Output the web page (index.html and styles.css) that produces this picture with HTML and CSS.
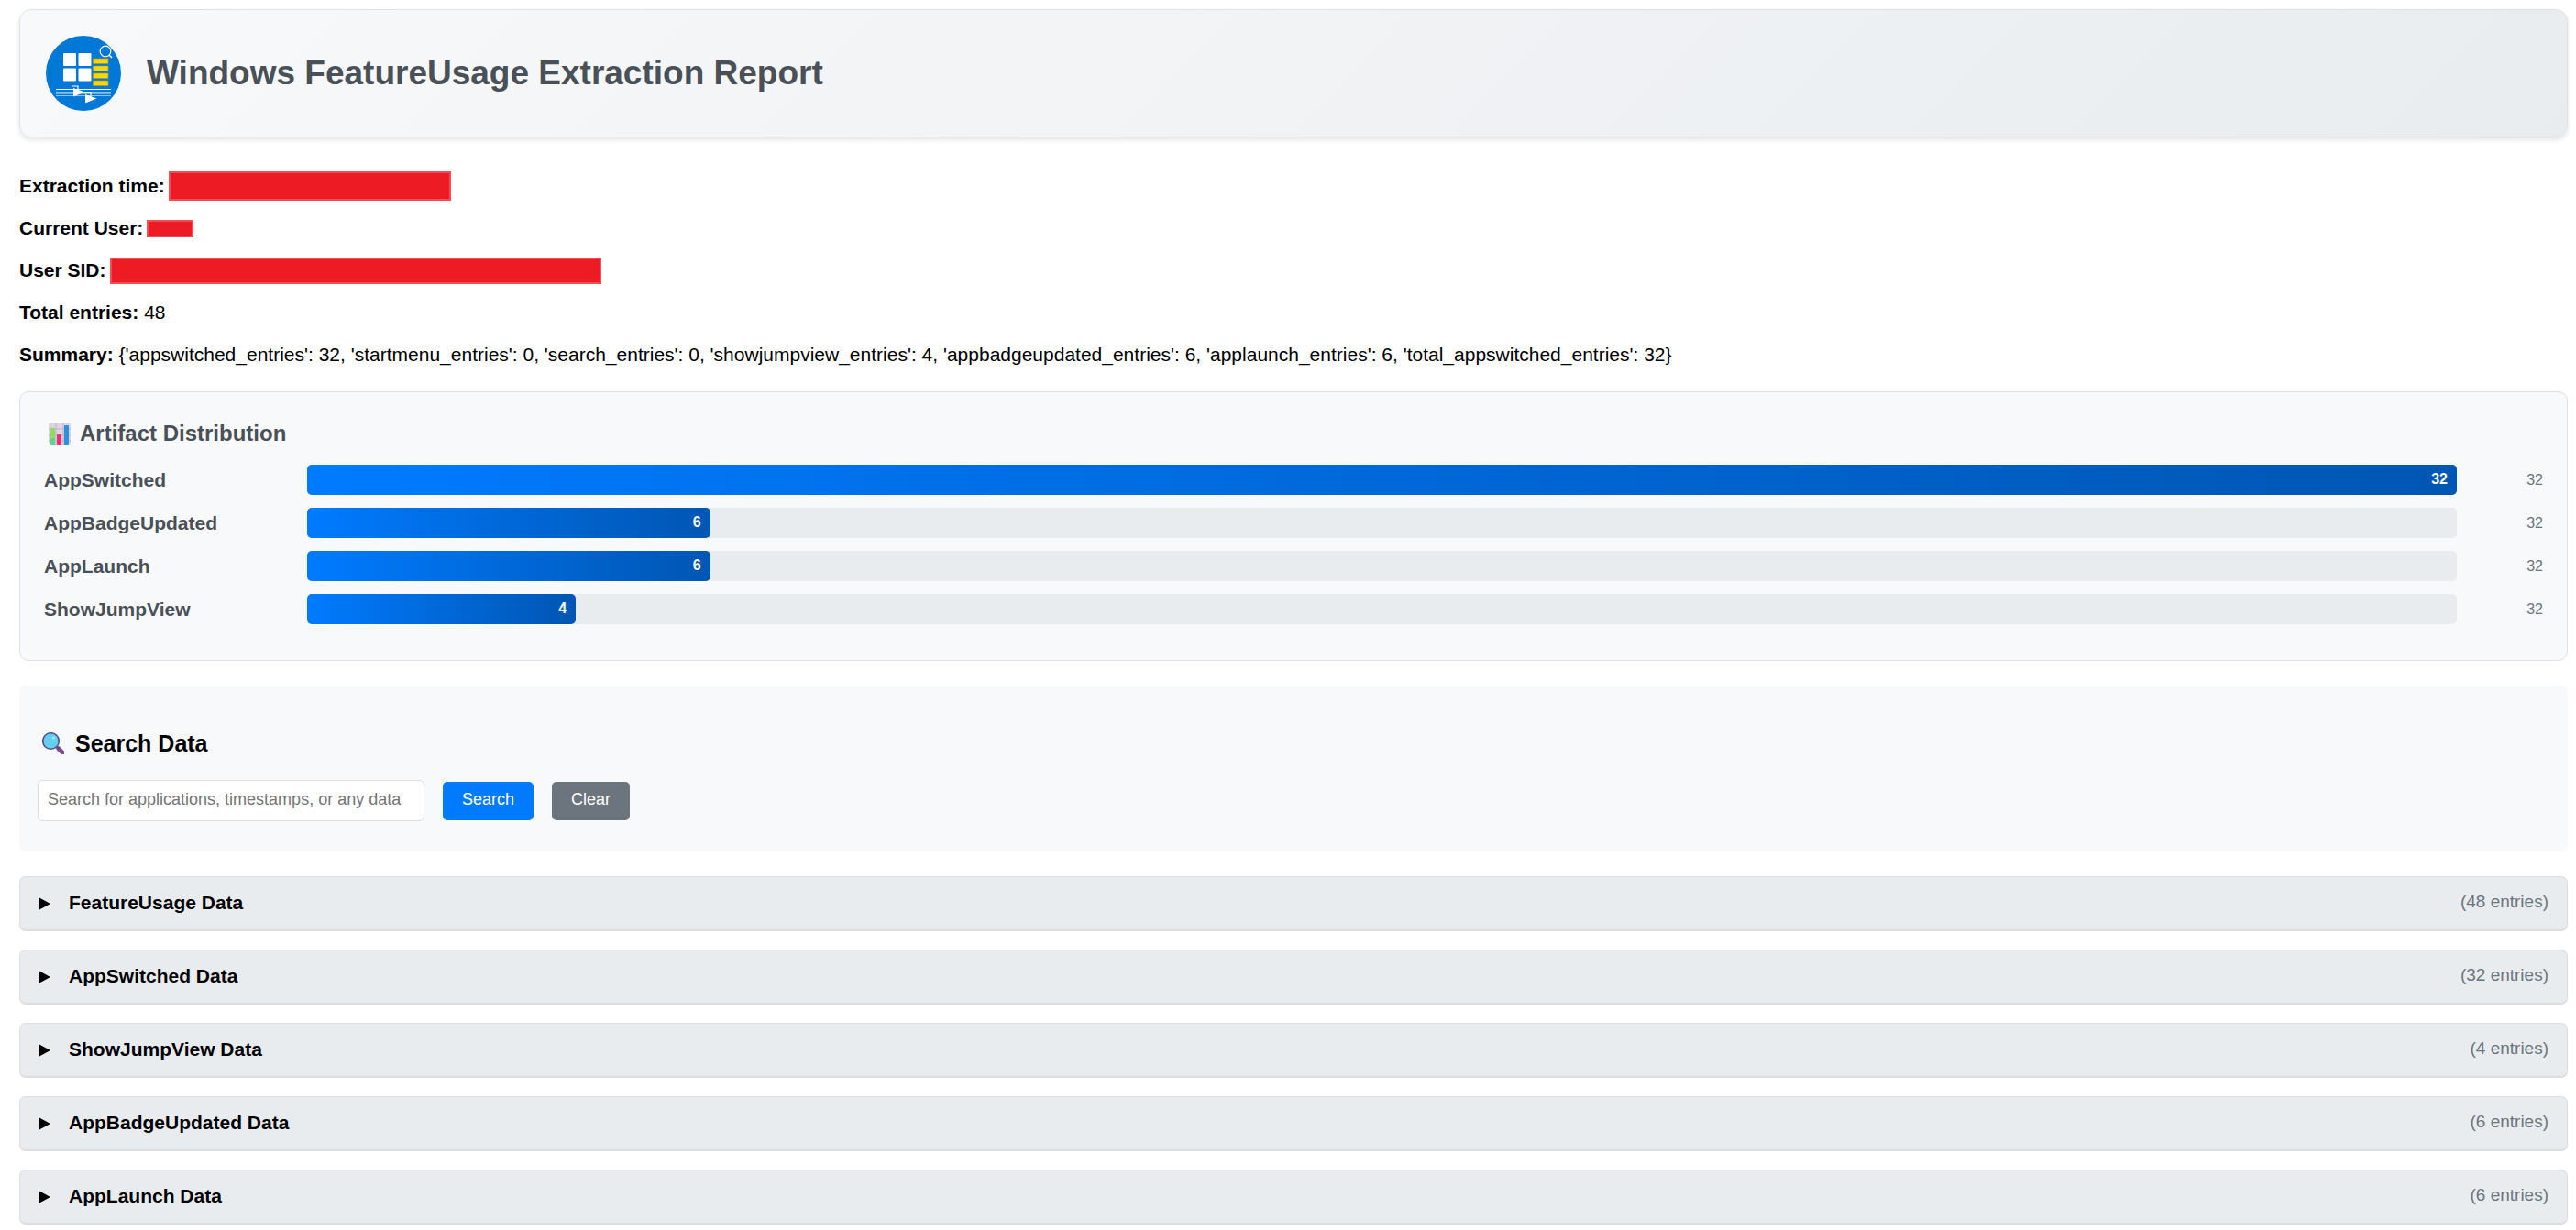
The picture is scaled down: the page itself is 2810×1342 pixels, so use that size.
FILE: index.html
```html
<!DOCTYPE html>
<html lang="en">
<head>
<meta charset="utf-8">
<title>Windows FeatureUsage Extraction Report</title>
<link rel="stylesheet" href="styles.css">
</head>
<body>
<header class="banner">
  <svg class="logo" viewBox="0 0 82 82" aria-hidden="true">
    <circle cx="41" cy="41" r="41" fill="#0078d7"/>
    <g fill="#fff">
      <rect x="19" y="19" width="14" height="14" rx="1"/>
      <rect x="35.500" y="19" width="14" height="14" rx="1"/>
      <rect x="19" y="35.500" width="14" height="14" rx="1"/>
      <rect x="35.500" y="35.500" width="14" height="14" rx="1"/>
    </g>
    <g fill="#ffd600" stroke="#a89a30" stroke-width=".6">
      <rect x="51.500" y="25" width="16.500" height="5.500"/>
      <rect x="51.500" y="33" width="16.500" height="5.500"/>
      <rect x="51.500" y="41" width="16.500" height="5.500"/>
      <rect x="51.500" y="49" width="16.500" height="5.500"/>
    </g>
    <g fill="none" stroke="#fff">
      <circle cx="65" cy="17" r="5.800" stroke-width="1.200"/>
      <path d="M69 21l3 3" stroke-width="1.600"/>
      <path d="M11 58.500h60" stroke-width="1.200"/>
      <path d="M11 61.500h60M11 65.500h60" stroke-width="1" opacity=".55"/>
      <path d="M11 63.500h60" stroke-width="1" opacity=".4"/>
      <path d="M28 55h7v5M42 61.500h7v5" stroke-width="1.200"/>
    </g>
    <path d="M30 57l12.500 4.500L30 66.500zM43 64l12.500 4.500L43 73.500z" fill="#fff"/>
  </svg>
  <h1 class="banner-title">Windows FeatureUsage Extraction Report</h1>
</header>

<section class="facts">
  <p class="fact"><strong>Extraction time:</strong><span class="redacted redacted-time"></span></p>
  <p class="fact"><strong>Current User:</strong><span class="redacted redacted-user"></span></p>
  <p class="fact"><strong>User SID:</strong><span class="redacted redacted-sid"></span></p>
  <p class="fact"><span><strong>Total entries:</strong> 48</span></p>
  <p class="fact"><span><strong>Summary:</strong> {'appswitched_entries': 32, 'startmenu_entries': 0, 'search_entries': 0, 'showjumpview_entries': 4, 'appbadgeupdated_entries': 6, 'applaunch_entries': 6, 'total_appswitched_entries': 32}</span></p>
</section>

<section class="chart">
  <h2 class="chart-title">
    <svg class="glyph" viewBox="0 0 24 24" aria-hidden="true">
      <rect width="24" height="24" rx="3" fill="#dcd5e2"/>
      <path d="M8 0v24M16 0v24M0 7h24M0 14h24M0 20h24" stroke="#bdb4c6" stroke-width="1"/>
      <rect x="2" y="6" width="5" height="18" rx="1" fill="#8fdc62"/>
      <path d="M2 17h5v7H2z" fill="#5fd58a"/>
      <rect x="9" y="13" width="5" height="11" rx="1" fill="#e8306f"/>
      <rect x="17" y="3" width="5" height="21" rx="1" fill="#2f8ee0"/>
    </svg>
    Artifact Distribution
  </h2>
  <div class="bars">
    <div class="bar-row"><span class="bar-label">AppSwitched</span><div class="track"><div class="fill" style="width:100%">32</div></div><span class="bar-max">32</span></div>
    <div class="bar-row"><span class="bar-label">AppBadgeUpdated</span><div class="track"><div class="fill" style="width:18.75%">6</div></div><span class="bar-max">32</span></div>
    <div class="bar-row"><span class="bar-label">AppLaunch</span><div class="track"><div class="fill" style="width:18.75%">6</div></div><span class="bar-max">32</span></div>
    <div class="bar-row"><span class="bar-label">ShowJumpView</span><div class="track"><div class="fill" style="width:12.5%">4</div></div><span class="bar-max">32</span></div>
  </div>
</section>

<section class="search">
  <h2 class="search-title">
    <svg class="glyph" viewBox="0 0 24 24" aria-hidden="true">
      <path d="M18 18l4 4" stroke="#874c8c" stroke-width="5" stroke-linecap="round"/>
      <path d="M15 15l3 3" stroke="#5b4a86" stroke-width="3"/>
      <circle cx="9.500" cy="9.500" r="8.800" fill="#62d0ee" stroke="#5a4f93" stroke-width="1.600"/>
      <circle cx="12.500" cy="6" r="1.600" fill="#a5e6f7"/>
    </svg>
    Search Data
  </h2>
  <form class="search-form">
    <input class="search-input" type="text" aria-label="Search data" placeholder="Search for applications, timestamps, or any data">
    <button class="btn btn-primary" type="button">Search</button>
    <button class="btn btn-muted" type="reset">Clear</button>
  </form>
</section>

<main class="groups">
  <details class="group"><summary class="group-head"><svg class="arrow" viewBox="0 0 12 13" aria-hidden="true"><path d="M0 0l12 6.500L0 13z"/></svg><span class="group-name">FeatureUsage Data</span><span class="group-count">(48 entries)</span></summary></details>
  <details class="group"><summary class="group-head"><svg class="arrow" viewBox="0 0 12 13" aria-hidden="true"><path d="M0 0l12 6.500L0 13z"/></svg><span class="group-name">AppSwitched Data</span><span class="group-count">(32 entries)</span></summary></details>
  <details class="group"><summary class="group-head"><svg class="arrow" viewBox="0 0 12 13" aria-hidden="true"><path d="M0 0l12 6.500L0 13z"/></svg><span class="group-name">ShowJumpView Data</span><span class="group-count">(4 entries)</span></summary></details>
  <details class="group"><summary class="group-head"><svg class="arrow" viewBox="0 0 12 13" aria-hidden="true"><path d="M0 0l12 6.500L0 13z"/></svg><span class="group-name">AppBadgeUpdated Data</span><span class="group-count">(6 entries)</span></summary></details>
  <details class="group"><summary class="group-head"><svg class="arrow" viewBox="0 0 12 13" aria-hidden="true"><path d="M0 0l12 6.500L0 13z"/></svg><span class="group-name">AppLaunch Data</span><span class="group-count">(6 entries)</span></summary></details>
</main>
</body>
</html>
```
FILE: styles.css
```css
* {
  box-sizing: border-box;
}

body {
  margin: 0;
  padding: 10px 9px 6px 21px;
  background: #fff;
  color: #000;
  font-family: "Liberation Sans", Arial, sans-serif;
  font-size: 21px;
  line-height: 24px;
}

h1, h2, p {
  margin: 0;
}

.banner {
  display: flex;
  align-items: center;
  gap: 28px;
  padding: 28px;
  border: 1px solid #dee2e6;
  border-radius: 13px;
  background: linear-gradient(135deg, #f8f9fa 0%, #e9ecef 100%);
  box-shadow: 0 3px 5px rgba(0, 0, 0, 0.1);
}

.logo {
  flex: none;
  width: 82px;
  height: 82px;
}

.banner-title {
  color: #495057;
  font-size: 37px;
  line-height: 44px;
}

.facts {
  margin: 30px 0 17px;
}

.fact {
  display: flex;
  align-items: center;
  gap: 4px;
  min-height: 46px;
}

.redacted {
  border: 2px solid #f54d55;
  background: #ed1c24;
}

.redacted-time {
  width: 308px;
  height: 32px;
}

.redacted-user {
  width: 51px;
  height: 19px;
}

.redacted-sid {
  width: 536px;
  height: 29px;
}

.chart {
  padding: 26px 26px 39px;
  border: 1px solid #dee2e6;
  border-radius: 10px;
  background: #f8f9fa;
}

.chart-title {
  display: flex;
  align-items: center;
  gap: 10px;
  padding-left: 5px;
  margin-bottom: 16px;
  color: #495057;
  font-size: 24px;
  line-height: 37px;
}

.glyph {
  flex: none;
  width: 24px;
  height: 24px;
}

.bars {
  display: grid;
  gap: 14px;
}

.bar-row {
  display: flex;
  align-items: center;
  gap: 14px;
}

.bar-label {
  flex: none;
  width: 273px;
  color: #495057;
  font-weight: bold;
}

.track {
  flex: 1;
  border-radius: 5px;
  background: #e9ecef;
}

.fill {
  height: 33px;
  padding-right: 10px;
  border-radius: 5px;
  background: linear-gradient(90deg, #007bff, #0056b3);
  color: #fff;
  font-size: 16px;
  font-weight: bold;
  line-height: 32px;
  text-align: right;
}

.bar-max {
  flex: none;
  width: 80px;
  color: #6c757d;
  font-size: 16px;
  text-align: right;
}

.search {
  margin: 27px 0;
  padding: 49px 20px 33px;
  border-radius: 7px;
  background: #f8f9fa;
}

.search-title {
  display: flex;
  align-items: center;
  gap: 12px;
  padding-left: 5px;
  margin-bottom: 26px;
  font-size: 25px;
  line-height: 28px;
}

.search-form {
  display: flex;
  align-items: center;
  gap: 20px;
}

.search-input {
  width: 422px;
  height: 45px;
  padding: 0 10px 2px;
  border: 1px solid #dddddd;
  border-radius: 5px;
  background: #fff;
  font-family: inherit;
  font-size: 18px;
}

.search-input::placeholder {
  color: #757575;
}

.btn {
  height: 42px;
  padding: 0 21px 2px;
  border: 0;
  border-radius: 5px;
  color: #fff;
  font-family: inherit;
  font-size: 18px;
}

.btn-primary {
  background: #007bff;
}

.btn-muted {
  background: #6c757d;
}

.groups {
  display: grid;
  gap: 20px;
}

.group-head {
  display: flex;
  align-items: center;
  gap: 20px;
  min-height: 60px;
  padding: 0 20px;
  border: 1px solid #dddddd;
  border-bottom-width: 2px;
  border-radius: 7px;
  background: #e9ecef;
  cursor: pointer;
  list-style: none;
}

.arrow {
  flex: none;
  width: 13px;
  height: 14px;
}

.group-name {
  flex: 1;
  padding-bottom: 2px;
  font-weight: bold;
}

.group-count {
  padding-bottom: 3px;
  color: #6c757d;
  font-size: 19px;
}
```
